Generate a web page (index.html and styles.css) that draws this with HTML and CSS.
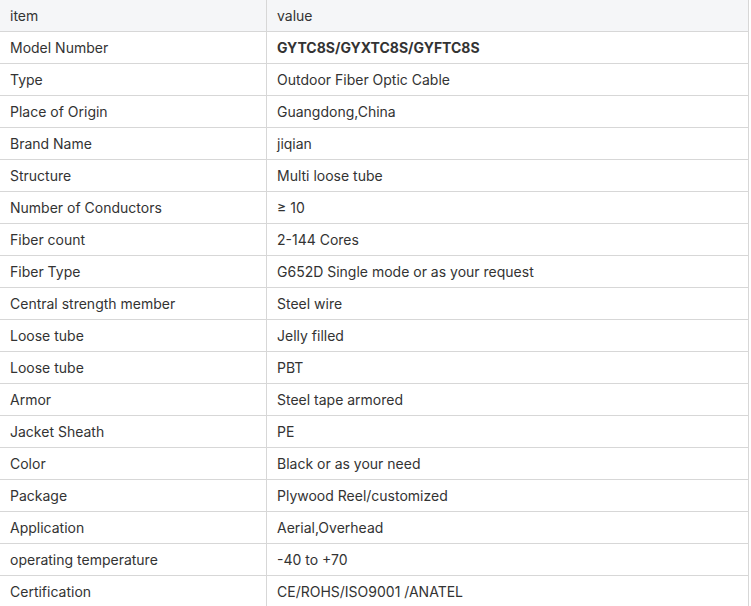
FILE: index.html
```html
<!DOCTYPE html>
<html>
<head>
<meta charset="utf-8">
<link rel="stylesheet" href="styles.css">
</head>
<body>
<table class="spec">
  <colgroup><col class="col-key"><col class="col-val"></colgroup>
  <thead>
    <tr><th>item</th><th>value</th></tr>
  </thead>
  <tbody>
    <tr><td>Model Number</td><td><strong>GYTC8S/GYXTC8S/GYFTC8S</strong></td></tr>
    <tr><td>Type</td><td>Outdoor Fiber Optic Cable</td></tr>
    <tr><td>Place of Origin</td><td>Guangdong,China</td></tr>
    <tr><td>Brand Name</td><td>jiqian</td></tr>
    <tr><td>Structure</td><td>Multi loose tube</td></tr>
    <tr><td>Number of Conductors</td><td>≥ 10</td></tr>
    <tr><td>Fiber count</td><td>2-144 Cores</td></tr>
    <tr><td>Fiber Type</td><td>G652D Single mode or as your request</td></tr>
    <tr><td>Central strength member</td><td>Steel wire</td></tr>
    <tr><td>Loose tube</td><td>Jelly filled</td></tr>
    <tr><td>Loose tube</td><td>PBT</td></tr>
    <tr><td>Armor</td><td>Steel tape armored</td></tr>
    <tr><td>Jacket Sheath</td><td>PE</td></tr>
    <tr><td>Color</td><td>Black or as your need</td></tr>
    <tr><td>Package</td><td>Plywood Reel/customized</td></tr>
    <tr><td>Application</td><td>Aerial,Overhead</td></tr>
    <tr><td>operating temperature</td><td>-40 to +70</td></tr>
    <tr><td>Certification</td><td>CE/ROHS/ISO9001 /ANATEL</td></tr>
  </tbody>
</table>
</body>
</html>
```
FILE: styles.css
```css
html, body {
  margin: 0;
  padding: 0;
  background: #ffffff;
}
.spec {
  width: 749px;
  table-layout: fixed;
  border-collapse: separate;
  border-spacing: 0;
  font-family: Inter, "Liberation Sans", sans-serif;
  font-size: 14px;
  color: #333333;
}
.col-key { width: 267px; }
.col-val { width: 482px; }
.spec th,
.spec td {
  height: 31px;
  padding: 0 10px;
  text-align: left;
  font-weight: 400;
  vertical-align: middle;
  border-bottom: 1px solid #d7d7d7;
  border-right: 1px solid #d7d7d7;
  white-space: nowrap;
}
.spec th {
  background: #f5f6f8;
}
.spec strong {
  font-weight: 700;
}
```
